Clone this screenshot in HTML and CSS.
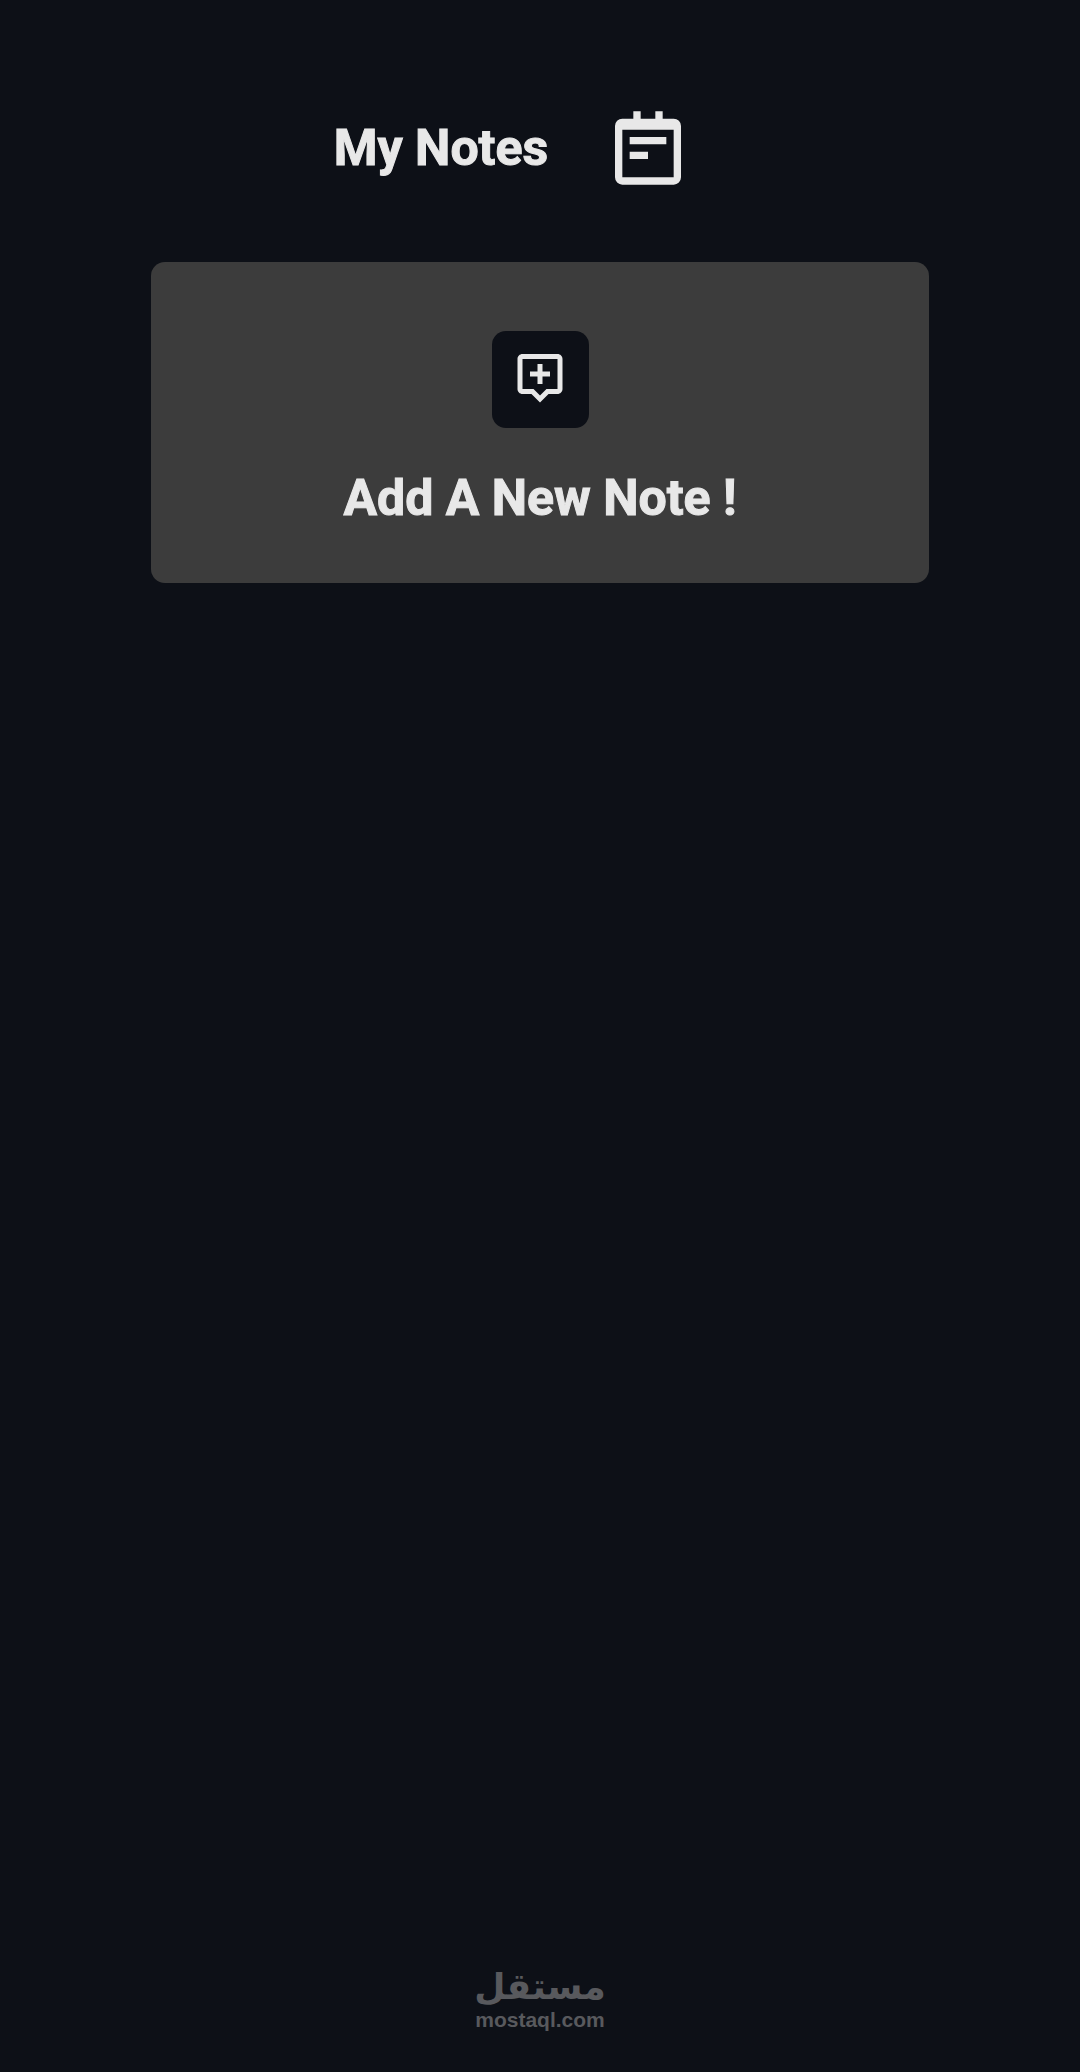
FILE: index.html
```html
<!DOCTYPE html>
<html lang="en">

<head>
    <meta charset="UTF-8">
    <meta name="viewport" content="width=device-width, initial-scale=1.0">
    <title>My Notes</title>
    <link rel="stylesheet" href="styles.css">
</head>

<body>
    <header class="header">
        <h1 class="title">My Notes</h1>
        <svg class="notes-icon" viewBox="0 0 24 24" aria-hidden="true">
            <path fill-rule="evenodd" d="M8 2h2v2h4V2h2v2h3a2 2 0 0 1 2 2v14a2 2 0 0 1-2 2H5a2 2 0 0 1-2-2V6a2 2 0 0 1 2-2h3zM5 7v13h14V7z" />
            <path d="M7 9h10v2H7zM7 13h5v2H7z" />
        </svg>
    </header>

    <main class="notes">
        <section class="add-card">
            <button class="add-btn" type="button" aria-labelledby="addLabel">
                <svg class="add-icon" viewBox="0 0 24 24" aria-hidden="true">
                    <path d="M8.586 18 12 21.414 15.414 18H19c1.103 0 2-.897 2-2V4c0-1.103-.897-2-2-2H5c-1.103 0-2 .897-2 2v12c0 1.103.897 2 2 2h3.586zM5 4h14v12h-4.414L12 18.586 9.414 16H5V4z" />
                    <path d="M11 14h2v-3h3V9h-3V6h-2v3H8v2h3z" />
                </svg>
            </button>
            <h2 class="title" id="addLabel">Add A New Note !</h2>
        </section>
    </main>

    <footer class="footer">
        <span class="brand" lang="ar" dir="rtl">مستقل</span>
        <span class="site">mostaql.com</span>
    </footer>
</body>

</html>
```
FILE: styles.css
```css
* {
    box-sizing: border-box;
}

body {
    margin: 0;
    min-height: 100vh;
    display: flex;
    flex-direction: column;
    background-color: #0d1017;
    color: #e8e8e8;
    font-family: Roboto, sans-serif;
}

.header {
    display: flex;
    justify-content: center;
    align-items: center;
    padding: 104px 54px 70px 0;
    gap: 56px;
}

.title {
    margin: 0;
    font-size: 50px;
    line-height: 60px;
    font-weight: 700;
    -webkit-text-stroke: 1px currentColor;
}

.notes-icon {
    width: 88px;
    height: 88px;
    fill: currentColor;
}

.notes {
    flex: 1;
}

.add-card {
    width: 72%;
    margin: 0 auto;
    padding: 69px 20px 55px;
    display: flex;
    flex-direction: column;
    align-items: center;
    gap: 40px;
    background-color: #3c3c3c;
    border-radius: 14px;
}

.add-btn {
    display: flex;
    justify-content: center;
    align-items: flex-start;
    width: 97px;
    height: 97px;
    padding: 18px 0 0;
    border: none;
    border-radius: 14px;
    background-color: #0d1017;
    color: #e8e8e8;
    cursor: pointer;
}

.add-icon {
    width: 60px;
    height: 60px;
    fill: currentColor;
}

/* brand */
.footer {
    display: flex;
    flex-direction: column;
    align-items: center;
    padding-bottom: 40px;
    color: #58595d;
    font-weight: 700;
}

.brand {
    font-family: "DejaVu Sans", sans-serif;
    font-size: 36px;
    line-height: 42px;
}

.site {
    font-family: "Liberation Sans", Arial, sans-serif;
    font-size: 21px;
    line-height: 24px;
}
```
